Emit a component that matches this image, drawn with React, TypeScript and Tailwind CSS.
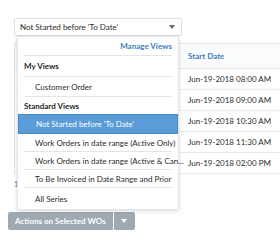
import React from "react";

const rows = [
  "Jun-19-2018 08:00 AM",
  "Jun-19-2018 09:00 AM",
  "Jun-19-2018 10:30 AM",
  "Jun-19-2018 11:30 AM",
  "Jun-19-2018 02:00 PM",
];

function Caret({ className }: { className?: string }) {
  return (
    <svg width="6" height="4" viewBox="0 0 6 4" className={className}>
      <path d="M0 0 L6 0 L3 4 Z" fill="currentColor" />
    </svg>
  );
}

export default function App() {
  return (
    <div
      className="relative w-[280px] h-[243px] overflow-hidden bg-white text-[#2b2b2b] text-[8px]"
      style={{ fontFamily: "Lato, 'Open Sans', sans-serif" }}
    >
      <div className="pt-[18px] pl-[14px]">
        {/* select */}
        <div className="flex h-[18px] w-[168px] items-center justify-between rounded-[2px] border border-[#dde1e5] pl-[5px] pr-[6px]">
          <span>Not Started before 'To Date'</span>
          <Caret className="text-[#666]" />
        </div>

        {/* table */}
        <div className="mt-[7px] border-l border-t border-[#e3e6e9]">
          <div className="flex h-[25px] items-center border-b border-[#e3e6e9] bg-[#fafbfc] pl-[173px] font-bold text-[#3f7fbf]">
            Start Date
          </div>
          {rows.map((r) => (
            <div
              key={r}
              className="flex h-[21px] items-center border-b border-[#e8eaed] pl-[173px]"
            >
              {r}
            </div>
          ))}
        </div>
        <div className="mt-[5px] text-[7px] text-[#3f7fbf]">1</div>
      </div>

      {/* action button */}
      <div className="absolute left-[8px] top-[212px] flex h-[18px] text-white font-bold">
        <div className="flex items-center rounded-l-[2px] bg-[#9ea9b2] px-[7px]">
          Actions on Selected WOs
        </div>
        <div className="ml-px flex w-[21px] items-center justify-center rounded-r-[2px] bg-[#9ea9b2]">
          <Caret />
        </div>
      </div>

      {/* dropdown */}
      <div className="absolute left-[17px] top-[36px] w-[162px] border border-[#e2e5e8] bg-white shadow-[0_1px_4px_rgba(0,0,0,0.15)]">
        <div className="mx-[6px] flex h-[19px] items-center justify-end border-b border-[#e3e6e9] font-bold text-[#3f7fbf]">
          Manage Views
        </div>
        <div className="mx-[6px] flex h-[21px] items-center border-b border-[#e3e6e9] font-bold text-[#1f1f1f]">
          My Views
        </div>
        <div className="mx-[6px] flex h-[20px] items-center border-b border-[#e3e6e9] pl-[11px]">
          Customer Order
        </div>
        <div className="mx-[6px] flex h-[17px] items-center font-bold text-[#1f1f1f]">
          Standard Views
        </div>
        <div className="flex h-[20px] items-center border border-[#4a88c7] bg-[#5b9bd8] pl-[17px] text-white">
          Not Started before 'To Date'
        </div>
        <div className="mx-[6px] flex h-[18px] items-center border-b border-[#e3e6e9] pl-[11px] whitespace-nowrap">
          Work Orders in date range (Active Only)
        </div>
        <div className="mx-[6px] flex h-[18px] items-center border-b border-[#e3e6e9] pl-[11px] whitespace-nowrap">
          Work Orders in date range (Active &amp; Can...
        </div>
        <div className="mx-[6px] flex h-[18px] items-center border-b border-[#e3e6e9] pl-[11px] whitespace-nowrap">
          To Be Invoiced in Date Range and Prior
        </div>
        <div className="mx-[6px] flex h-[21px] items-center pl-[11px]">
          All Series
        </div>
      </div>
    </div>
  );
}
